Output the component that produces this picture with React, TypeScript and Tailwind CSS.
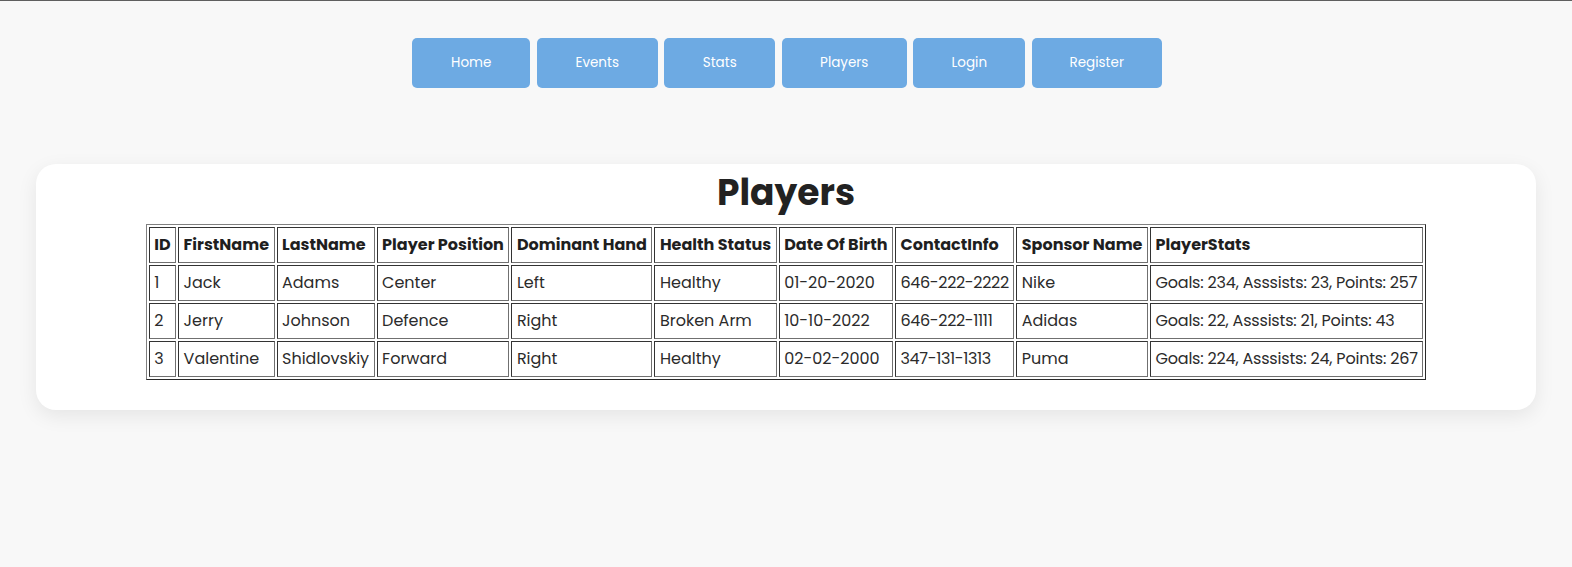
const navItems = [
  { label: 'Home', w: 'w-[118px]' },
  { label: 'Events', w: 'w-[121px]' },
  { label: 'Stats', w: 'w-[111px]' },
  { label: 'Players', w: 'w-[125px]' },
  { label: 'Login', w: 'w-[112px]' },
  { label: 'Register', w: 'w-[130px]' },
]

const columns = [
  'ID',
  'FirstName',
  'LastName',
  'Player Position',
  'Dominant Hand',
  'Health Status',
  'Date Of Birth',
  'ContactInfo',
  'Sponsor Name',
  'PlayerStats',
]

const players = [
  ['1', 'Jack', 'Adams', 'Center', 'Left', 'Healthy', '01-20-2020', '646-222-2222', 'Nike', 'Goals: 234, Asssists: 23, Points: 257'],
  ['2', 'Jerry', 'Johnson', 'Defence', 'Right', 'Broken Arm', '10-10-2022', '646-222-1111', 'Adidas', 'Goals: 22, Asssists: 21, Points: 43'],
  ['3', 'Valentine', 'Shidlovskiy', 'Forward', 'Right', 'Healthy', '02-02-2000', '347-131-1313', 'Puma', 'Goals: 224, Asssists: 24, Points: 267'],
]

// digits sit a little tighter in the original
const dataTracking: Record<number, string> = {
  7: 'tracking-[-0.35px]',
  9: 'tracking-[-0.2px]',
}

// inset cell borders, like a table with border="1"
const cell =
  'h-[36px] border border-t-[#333] border-l-[#333] border-b-[#707070] border-r-[#707070] px-[4.5px] text-left align-middle leading-6 whitespace-nowrap'

const App = () => {
  return (
    <div className="min-h-screen border-t border-[#5f5f5f] bg-[#f8f8f8] font-['Poppins','Open_Sans',sans-serif] text-[#222]">
      <nav className="flex justify-center gap-[6.5px] pt-[37px] pl-[2px]">
        {navItems.map((item) => (
          <a
            key={item.label}
            href="#"
            className={`${item.w} flex h-[50px] items-center justify-center rounded-[5px] bg-[#6daae3] text-[13.5px] text-white`}
          >
            {item.label}
          </a>
        ))}
      </nav>

      <section className="mx-auto mt-[76px] max-w-[1500px] rounded-[20px] bg-white pb-[30px] pt-[7px] shadow-[0_6px_20px_rgba(0,0,0,0.08)]">
        <h1 className="text-center text-[36px] leading-[43px] font-bold text-[#222]">Players</h1>
        <table className="mx-auto mt-[10px] border-separate border-spacing-[2px] border border-t-[#808080] border-l-[#808080] border-b-[#2a2a2a] border-r-[#2a2a2a] text-[16px] text-[#2b2b2b]">
          <thead>
            <tr>
              {columns.map((col) => (
                <th key={col} className={`${cell} font-bold text-[#1f1f1f]`}>
                  {col}
                </th>
              ))}
            </tr>
          </thead>
          <tbody>
            {players.map((row) => (
              <tr key={row[0]}>
                {row.map((value, i) => (
                  <td key={i} className={`${cell} font-normal ${dataTracking[i] ?? ''}`}>
                    {value}
                  </td>
                ))}
              </tr>
            ))}
          </tbody>
        </table>
      </section>
    </div>
  )
}

export default App
